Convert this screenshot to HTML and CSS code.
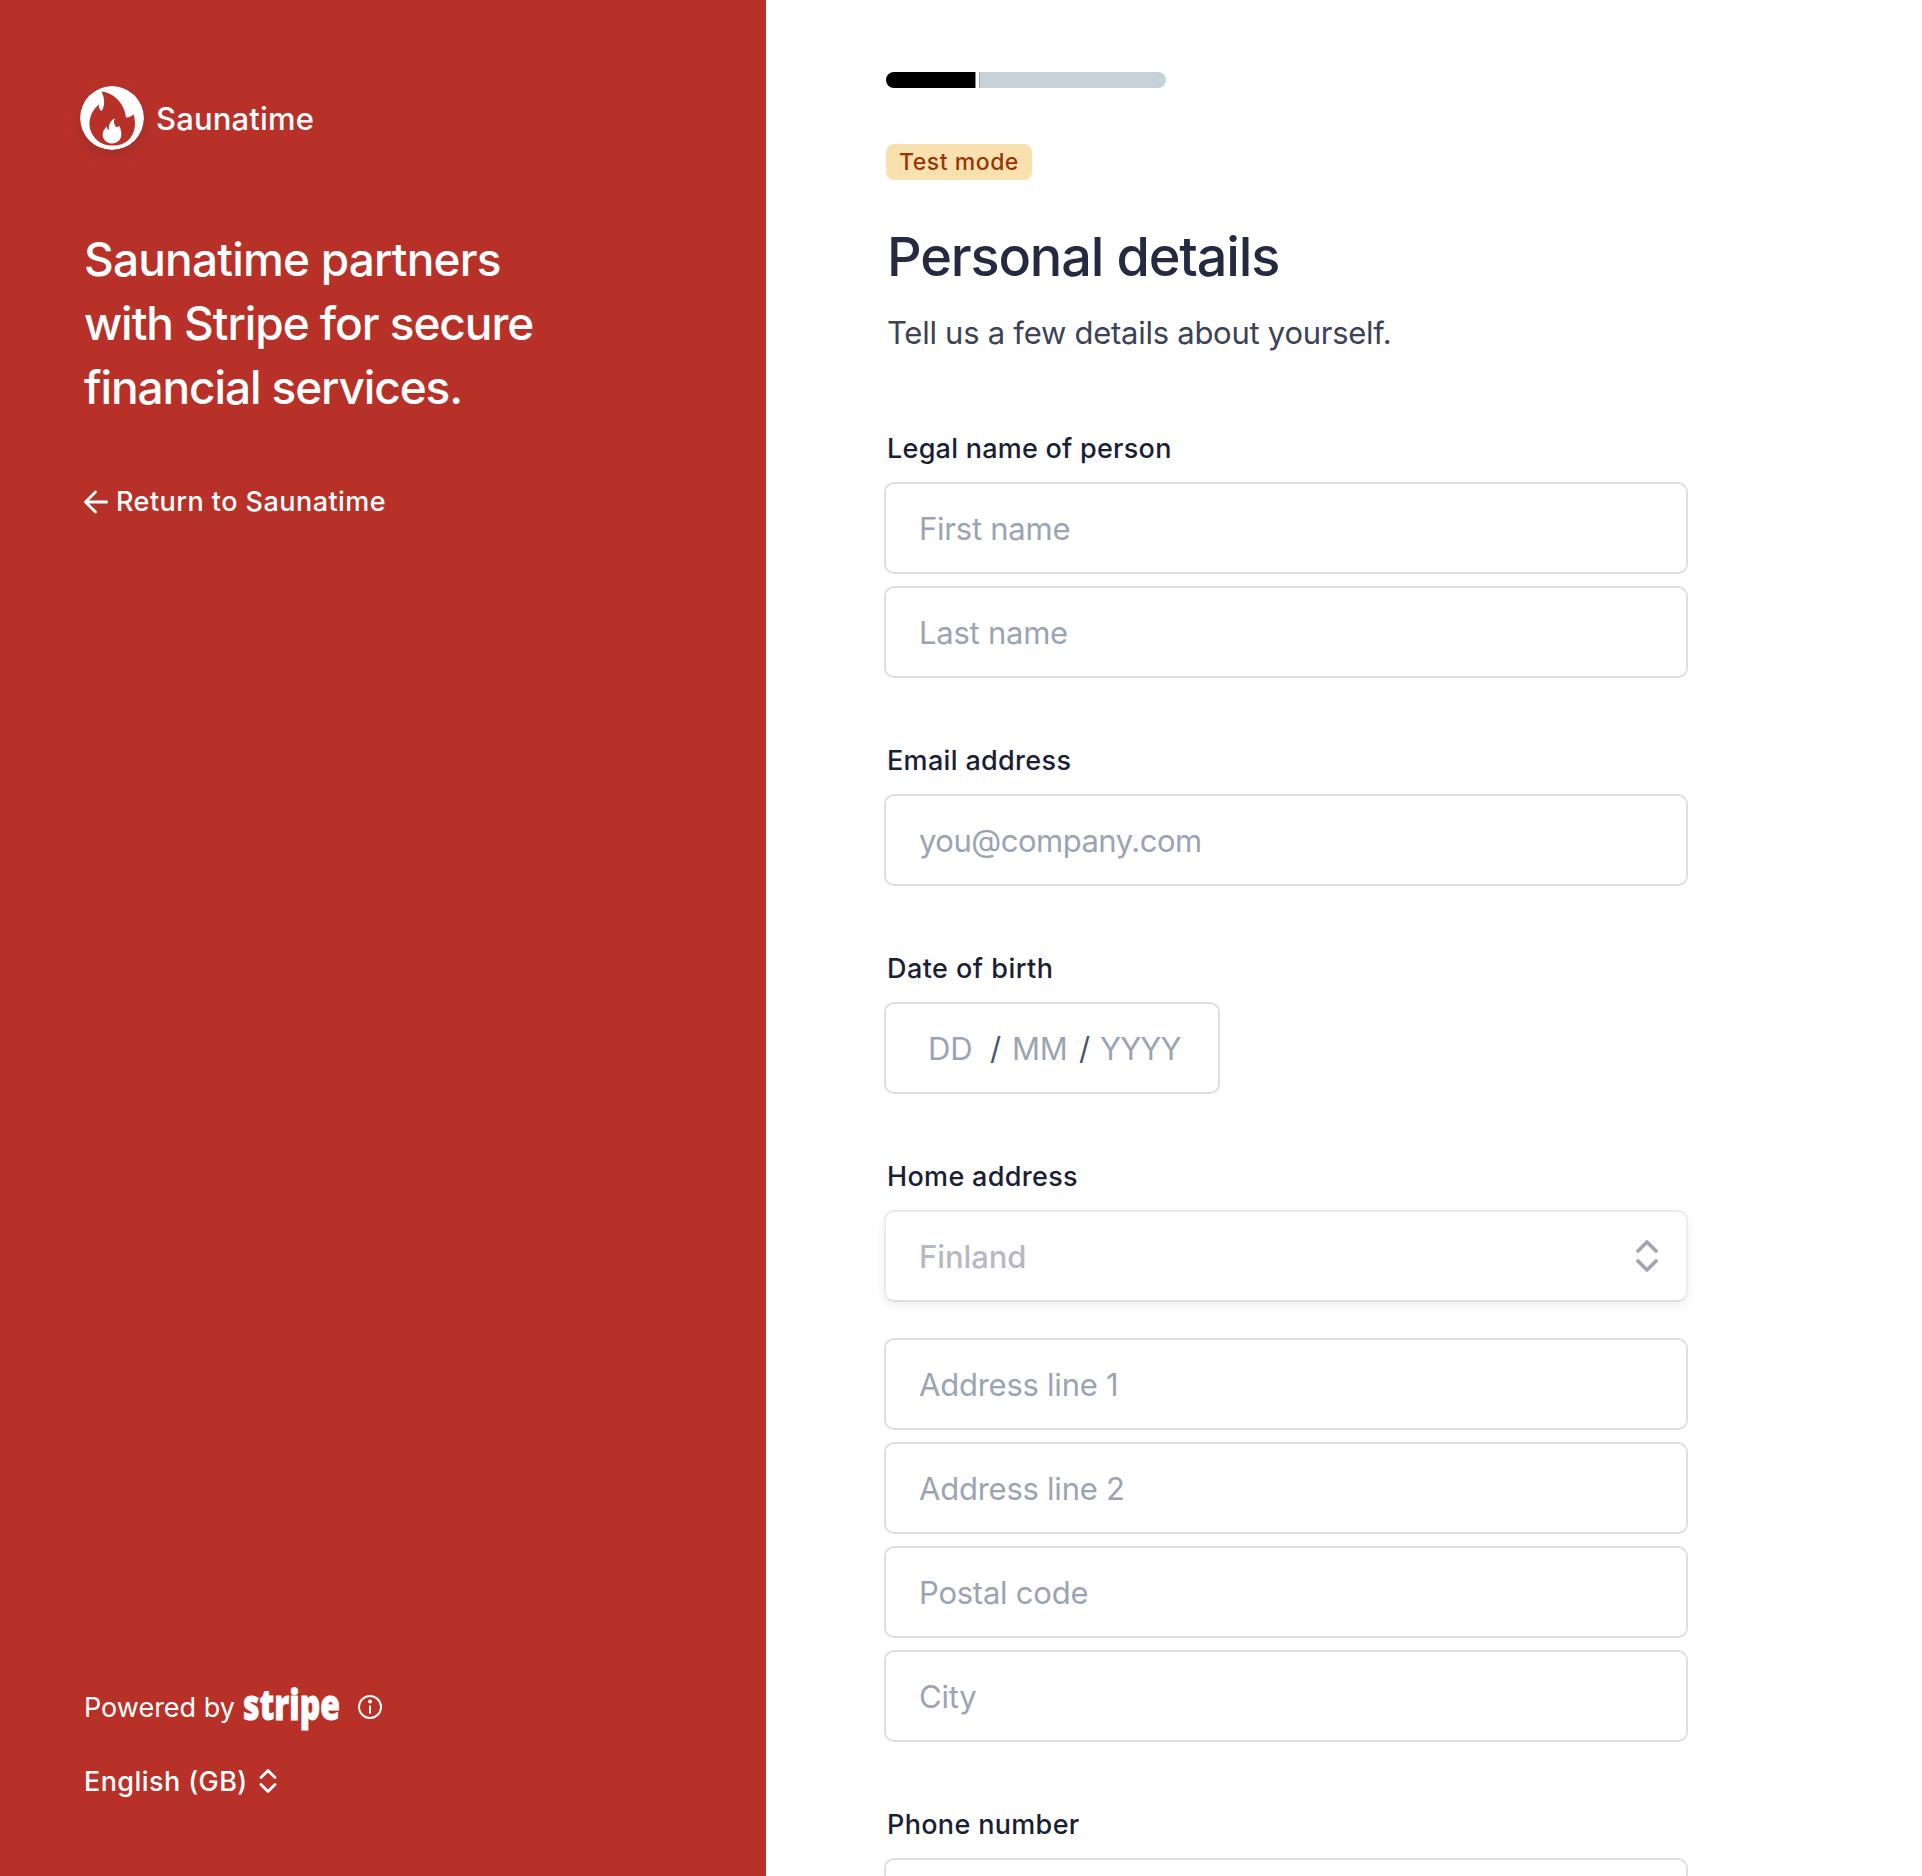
FILE: index.html
```html
<!DOCTYPE html>
<html lang="en-GB">
<head>
<meta charset="utf-8">
<title>Personal details</title>
<link rel="stylesheet" href="styles.css">
</head>
<body>
<div class="page">
  <aside class="sidebar">
    <div class="brand">
      <svg class="brand-logo" width="64" height="64" viewBox="0 0 64 64">
        <circle cx="32" cy="32" r="32" fill="#fff"/>
        <path fill="#b83129" d="M21.500 5.500C32 6.500 44.500 16 46 31.500C49.500 31.500 52 30 53.500 28C56.500 38 55 47 49 53.500C44 58.500 37 60 32 59.500C25 59.500 19 57 14.500 51.500C10 46 8.500 39 10 33C11.500 26 15 22 19 18.500C18.500 21.500 19.500 24 21.800 25C25.500 18 24.500 12 21.500 5.500Z"/>
        <path fill="#fff" d="M34.800 32.500C33.200 35.500 34 38 35.800 40.500C37.300 41.500 38.500 41 39 39.500C41.500 44 42.500 50 39.500 54C36 58.500 28 58.500 24.500 54C21 49 23 43.500 27 40.500C27 42.500 27.500 43.500 29 44C28.300 38.500 30.500 34.500 34.800 32.500Z"/>
      </svg>
      <span class="brand-name">Saunatime</span>
    </div>
    <h2 class="pitch"><span class="pitch-a">Saunatime partners</span><br><span class="pitch-b">with Stripe for secure</span><br><span class="pitch-c">financial services.</span></h2>
    <a class="return">
      <svg width="24" height="24" viewBox="0 0 24 24" fill="none" stroke="#fff" stroke-width="2.800" stroke-linecap="round" stroke-linejoin="round"><path d="M11.500 2L1.500 12L11.500 22M2 12H22.700"/></svg>
      <span>Return to Saunatime</span>
    </a>
    <footer class="foot">
      <div class="powered">
        <span class="powered-text">Powered by</span>
        <svg class="stripe" width="98" height="66" viewBox="0 0 98 66"><text x="0" y="45.500" textLength="97" lengthAdjust="spacingAndGlyphs">stripe</text></svg>
        <svg class="info" width="24" height="24" viewBox="0 0 24 24"><circle cx="12" cy="12" r="11" fill="none" stroke="#fff" stroke-width="1.900"/><circle cx="12" cy="6.600" r="2" fill="#fff"/><path d="M12 10.500V18.500" stroke="#fff" stroke-width="2"/></svg>
      </div>
      <div class="language">
        <span>English (GB)</span>
        <svg width="18" height="26" viewBox="0 0 18 26" fill="none" stroke="#fff" stroke-width="2.800" stroke-linecap="round" stroke-linejoin="round"><path d="M2 9.500L9 2.500L16 9.500M2 16.500L9 23.500L16 16.500"/></svg>
      </div>
    </footer>
  </aside>
  <main class="content">
    <div class="progress"><div class="done"></div><div class="todo"></div></div>
    <div class="badge">Test mode</div>
    <h1>Personal details</h1>
    <p class="lead">Tell us a few details about yourself.</p>
    <form>
      <section class="group">
        <label class="l-name">Legal name of person</label>
        <input class="field" placeholder="First name">
        <input class="field" placeholder="Last name">
      </section>
      <section class="group">
        <label class="l-email">Email address</label>
        <input class="field email" placeholder="you@company.com">
      </section>
      <section class="group">
        <label class="l-dob">Date of birth</label>
        <div class="field dob"><span class="dd">DD</span><span class="slash">/</span><span class="mm">MM</span><span class="slash">/</span><span class="yy">YYYY</span></div>
      </section>
      <section class="group">
        <label class="l-home">Home address</label>
        <div class="field select">
          <span>Finland</span>
          <svg width="22" height="32" viewBox="0 0 22 32" fill="none" stroke="#a3a5b1" stroke-width="3.800" stroke-linecap="round" stroke-linejoin="round"><path d="M2 11L11 2L20 11M2 21L11 30L20 21"/></svg>
        </div>
        <input class="field" placeholder="Address line 1">
        <input class="field" placeholder="Address line 2">
        <input class="field" placeholder="Postal code">
        <input class="field" placeholder="City">
      </section>
      <section class="group">
        <label class="l-phone">Phone number</label>
        <input class="field">
      </section>
    </form>
  </main>
</div>
</body>
</html>
```
FILE: styles.css
```css
* { box-sizing: border-box; }
body { margin: 0; background: #fff; font-family: Inter, sans-serif; font-kerning: normal; }
.page { display: flex; height: 1876px; overflow: hidden; }
.sidebar { width: 766px; flex: none; display: flex; flex-direction: column; padding: 86px 0 0 80px; background: #b83129; color: #fff; }
.brand { display: flex; align-items: center; gap: 12px; height: 64px; }
.brand-logo { border-radius: 50%; box-shadow: 0 6px 14px rgba(50, 30, 50, .16); }
.brand-name { padding-top: 2px; font-size: 31px; line-height: 40px; font-weight: 450; letter-spacing: .15px; }
.pitch { margin: 77px 0 0 4px; font-size: 46px; line-height: 64px; font-weight: 500; white-space: nowrap; }
.pitch-a { letter-spacing: -.8px; }
.pitch-b { letter-spacing: -1.05px; }
.pitch-c { letter-spacing: -1.12px; }
.return { display: flex; align-items: center; gap: 8px; height: 36px; margin: 65px 0 0 4px; font-size: 27px; line-height: 36px; font-weight: 500; letter-spacing: .45px; }
.foot { margin: auto 0 77px 4px; }
.powered { display: flex; align-items: center; height: 44px; font-size: 27px; }
.powered-text { width: 156px; }
.stripe { margin-left: 3px; overflow: visible; }
.stripe text { font: 800 42px "Open Sans", sans-serif; fill: #fff; stroke: #fff; stroke-width: .8px; }
.info { margin-left: 17px; }
.language { display: flex; align-items: center; gap: 11px; height: 36px; margin-top: 34px; font-size: 27px; font-weight: 500; letter-spacing: .42px; }
.content { width: 804px; margin-left: 118px; padding-top: 72px; color: #1a1f36; }
.progress { display: flex; gap: 3px; width: 280px; height: 16px; margin-left: 2px; border-radius: 8px; overflow: hidden; }
.done { width: 90px; background: #000; border-right: 1px solid #8c8c8c; }
.todo { flex: 1; background: #c8d0da; border-left: 1px solid #a5abb3; }
.badge { width: 146px; height: 36px; margin: 56px 0 0 2px; border-radius: 8px; background: #f8e1af; color: #983705; font-size: 23px; line-height: 37px; font-weight: 500; letter-spacing: .52px; text-align: center; }
h1 { margin: 45px 0 0 3px; font-size: 54px; line-height: 64px; font-weight: 500; letter-spacing: -1.15px; color: #262a40; white-space: nowrap; }
.lead { margin: 24px 0 0 3px; font-size: 31px; line-height: 40px; letter-spacing: -.26px; color: #3c4257; white-space: nowrap; }
form { padding-top: 82px; }
.group { display: flex; flex-direction: column; gap: 12px; margin-bottom: 69px; }
.group label { height: 35px; margin-left: 3px; font-size: 27px; line-height: 27px; font-weight: 500; letter-spacing: .33px; }
.group .l-name { letter-spacing: .25px; }
.group .l-dob { letter-spacing: .46px; }
.field { display: block; width: 804px; height: 92px; padding: 0 33px; border: 2px solid #dddee4; border-radius: 10px; background: #fff; font: 400 31px Inter, sans-serif; letter-spacing: -.24px; color: #4f566b; outline: 0; }
.field::placeholder { color: #9aa4b3; opacity: 1; }
.email { letter-spacing: -.5px; }
.dob { display: flex; align-items: center; width: 336px; padding-left: 42px; color: #9aa4b3; }
.dob .dd { width: 62px; }
.dob .mm { width: 67px; }
.dob .yy { margin-left: -1px; letter-spacing: -.9px; }
.slash { width: 22px; color: #4f566b; }
.select { display: flex; align-items: center; justify-content: space-between; padding-right: 28px; margin-bottom: 24px; border: 2px solid #ebebed; border-bottom-color: #dedfe1; font-weight: 500; letter-spacing: -.1px; color: #b6b9c2; box-shadow: 0 4px 10px rgba(60, 66, 87, .08); }
```
